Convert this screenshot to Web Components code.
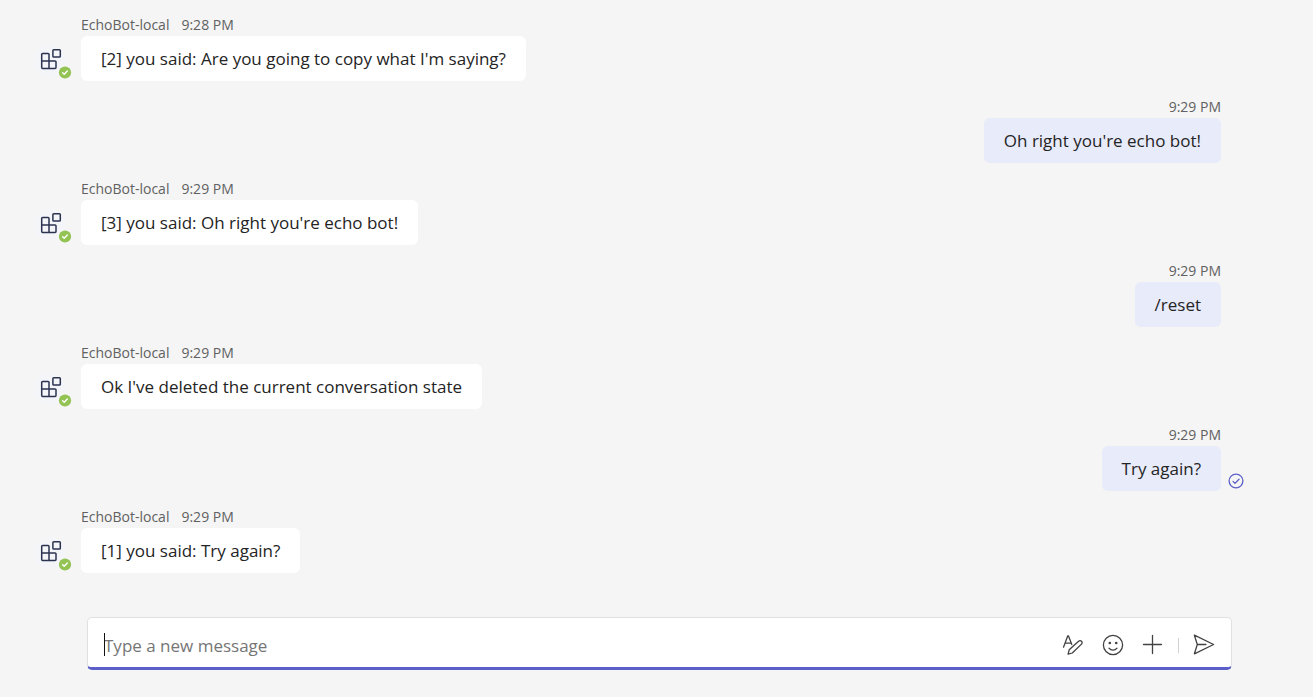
<!DOCTYPE html>
<html lang="en">
<head>
<meta charset="utf-8">
<meta name="viewport" content="width=device-width, initial-scale=1">
<title>EchoBot-local</title>
<style>
  body { margin: 0; background: #f5f5f5; color: #242424; font-family: "Segoe UI", "Open Sans", "Noto Sans", sans-serif; }
</style>
</head>
<body>
<chat-view>
  <chat-message author="EchoBot-local" time="9:28 PM">[2] you said: Are you going to copy what I'm saying?</chat-message>
  <chat-message mine time="9:29 PM">Oh right you're echo bot!</chat-message>
  <chat-message author="EchoBot-local" time="9:29 PM">[3] you said: Oh right you're echo bot!</chat-message>
  <chat-message mine time="9:29 PM">/reset</chat-message>
  <chat-message author="EchoBot-local" time="9:29 PM">Ok I've deleted the current conversation state</chat-message>
  <chat-message mine sent time="9:29 PM">Try again?</chat-message>
  <chat-message author="EchoBot-local" time="9:29 PM">[1] you said: Try again?</chat-message>
  <chat-composer slot="composer"></chat-composer>
</chat-view>

<script>
function mount(el, html) {
  const root = el.attachShadow({ mode: 'open' });
  root.innerHTML = html;
  return root;
}

class ChatView extends HTMLElement {
  constructor() {
    super();
    mount(this, `
      <style>
        :host { display: flex; flex-direction: column; box-sizing: border-box; min-height: 100vh; padding: 12px 0 27px; }
        main { flex: 1; display: flex; flex-direction: column; gap: 13px; padding: 0 61px 24px 34px; }
        footer { padding: 0 81px 0 87px; }
      </style>
      <main><slot></slot></main>
      <footer><slot name="composer"></slot></footer>`);
  }
}

class BotAvatar extends HTMLElement {
  constructor() {
    super();
    mount(this, `
      <style>
        :host { display: block; position: relative; width: 32px; height: 32px; border-radius: 50%; background: #f3f5f8; }
        svg { display: block; }
        .presence { position: absolute; right: -6px; bottom: -2px; }
      </style>
      <svg width="32" height="32" viewBox="0 0 32 32" fill="none" stroke="#2b3350" stroke-width="1.5" stroke-linejoin="round" aria-hidden="true">
        <path d="M8.6 8.4h5.5a.9.9 0 0 1 .9.9v6.7h6.1a.9.9 0 0 1 .9.9v5.7a.9.9 0 0 1-.9.9H8.6a.9.9 0 0 1-.9-.9V9.3a.9.9 0 0 1 .9-.9zM7.7 16H15v7.5"/>
        <rect x="18.9" y="4.7" width="7.4" height="7.4" rx=".9"/>
      </svg>
      <svg class="presence" width="14" height="14" viewBox="0 0 14 14" role="img" aria-label="Available">
        <circle cx="7" cy="7.5" r="6.1" fill="#92c353"/>
        <path d="M4.6 7.7l1.6 1.6 3.1-3.2" fill="none" stroke="#fff" stroke-width="1.4" stroke-linecap="round" stroke-linejoin="round"/>
      </svg>`);
  }
}

class ChatMessage extends HTMLElement {
  constructor() {
    super();
    const mine = this.hasAttribute('mine');
    const author = this.getAttribute('author');
    const root = mount(this, `
      <style>
        :host { display: flex; align-items: flex-end; gap: 15px; }
        :host([mine]) { justify-content: flex-end; gap: 7px; }
        .body { display: flex; flex-direction: column; align-items: flex-start; min-width: 0; }
        :host([mine]) .body { align-items: flex-end; }
        header { display: flex; gap: 12px; padding-top: 2px; font-size: 14px; line-height: 22px; color: #616161; }
        .bubble { padding: 10px 20px; font-size: 17px; line-height: 25px; background: #fff; border-radius: 6px; }
        :host([mine]) .bubble { background: #e8ebfa; }
        bot-avatar { margin-bottom: 4px; }
        .receipt { width: 24px; height: 18px; }
        .receipt svg { display: block; }
      </style>
      ${mine ? '' : '<bot-avatar></bot-avatar>'}
      <div class="body">
        <header>${author ? '<span class="author"></span>' : ''}<time></time></header>
        <div class="bubble"><slot></slot></div>
      </div>
      ${mine ? '<div class="receipt"></div>' : ''}`);
    if (author) root.querySelector('.author').textContent = author;
    root.querySelector('time').textContent = this.getAttribute('time');
    if (this.hasAttribute('sent')) {
      root.querySelector('.receipt').innerHTML = `
        <svg width="16" height="16" viewBox="0 0 16 16" fill="none" stroke="#5b5fc7" stroke-width="1.3" stroke-linecap="round" stroke-linejoin="round" role="img" aria-label="Sent">
          <circle cx="8" cy="8" r="6.9"/><path d="M5 8.4l2 2 4-4.2"/>
        </svg>`;
    }
  }
}

class ChatComposer extends HTMLElement {
  constructor() {
    super();
    mount(this, `
      <style>
        :host { display: flex; align-items: center; box-sizing: border-box; height: 53px; padding: 5px 15px 0 16px;
          background: #fff; border: 1px solid #e0e0e0; border-bottom: 3px solid #5b5fc7; border-radius: 5px; }
        .field { position: relative; flex: 1; display: flex; }
        .caret { position: absolute; left: 0; top: 0; width: 1px; height: 23px; background: #111; }
        input { flex: 1; min-width: 0; border: 0; outline: 0; padding: 0; background: none; height: 25px; font: inherit; font-size: 17px; color: #242424; }
        input::placeholder { color: #757575; opacity: 1; }
        .tools { display: flex; align-items: center; gap: 16px; }
        button { display: block; border: 0; padding: 0; background: none; width: 24px; height: 24px; color: #424242; }
        svg { display: block; }
        .rule { width: 1px; height: 15px; background: #d1d1d1; margin: 0 -3px; }
      </style>
      <div class="field"><input type="text" aria-label="Type a new message" placeholder="Type a new message"><span class="caret"></span></div>
      <div class="tools">
        <button type="button" aria-label="Format">
          <svg width="24" height="24" viewBox="0 0 24 24" fill="none" stroke="currentColor" stroke-width="1.3" stroke-linecap="round" stroke-linejoin="round">
            <path d="M2.5 14.2L6.8 2.8h.6l3.4 8.7M4.1 10.2h5.6"/>
            <path d="M8.2 16.8l9.4-8.6a2.05 2.05 0 0 1 2.9 0 2.05 2.05 0 0 1 0 2.9l-9.2 8.9-4.2 1.2z"/>
          </svg></button>
        <button type="button" aria-label="Emoji">
          <svg width="24" height="24" viewBox="0 0 24 24" fill="none" stroke="currentColor" stroke-width="1.3" stroke-linecap="round">
            <circle cx="12" cy="12" r="9.6"/><path d="M8 15.2c2.1 2.6 5.9 2.6 8 0"/>
            <circle cx="8.8" cy="10" r="1.3" fill="currentColor" stroke="none"/><circle cx="15.2" cy="10" r="1.3" fill="currentColor" stroke="none"/>
          </svg></button>
        <button type="button" aria-label="More options">
          <svg width="24" height="24" viewBox="0 0 24 24" fill="none" stroke="currentColor" stroke-width="1.3" stroke-linecap="round">
            <path d="M11.5 2.5v18M2.5 11.5h18"/>
          </svg></button>
        <span class="rule"></span>
        <button type="button" aria-label="Send">
          <svg width="24" height="24" viewBox="0 0 24 24" fill="none" stroke="currentColor" stroke-width="1.3" stroke-linecap="round" stroke-linejoin="round">
            <path d="M2.4 2.2L21.6 11.5 2.4 20.8 5.3 11.5zM5.3 11.5h8.6"/>
          </svg></button>
      </div>`);
  }
}

customElements.define('bot-avatar', BotAvatar);
customElements.define('chat-message', ChatMessage);
customElements.define('chat-composer', ChatComposer);
customElements.define('chat-view', ChatView);
</script>
</body>
</html>
